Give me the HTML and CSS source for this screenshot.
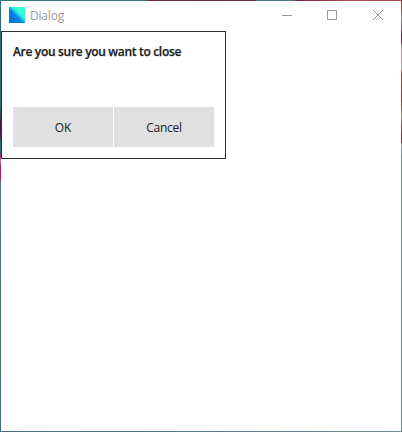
FILE: index.html
```html
<!DOCTYPE html>
<html lang="en">
<head>
<meta charset="utf-8">
<title>Dialog</title>
<link rel="stylesheet" href="styles.css">
</head>
<body>
<div class="desktop">
  <div class="edge edge-top"></div>
  <div class="edge edge-left"></div>
  <main class="window">
    <header class="titlebar">
      <span class="app-icon"></span>
      <span class="title">Dialog</span>
      <svg class="control" width="45" height="29" viewBox="0 0 45 29"><path d="M17 14.500h10"/></svg>
      <svg class="control" width="45" height="29" viewBox="0 0 45 29"><path d="M17.500 9.500h9v9h-9z"/></svg>
      <svg class="control" width="45" height="29" viewBox="0 0 45 29"><path d="M18 9l10 10M28 9l-10 10"/></svg>
    </header>
    <section class="dialog">
      <h1 class="message">Are you sure you want to close</h1>
      <div class="actions">
        <button class="btn">OK</button>
        <button class="btn btn-cancel">Cancel</button>
      </div>
    </section>
  </main>
  <div class="edge edge-right"></div>
  <div class="edge edge-bottom"></div>
</div>
</body>
</html>
```
FILE: styles.css
```css
* { box-sizing: border-box; }
body {
  margin: 0;
  overflow: hidden;
  font-family: "Open Sans", "Noto Sans", sans-serif;
}
.desktop {
  display: grid;
  width: 402px;
  height: 432px;
  grid-template: 1px 430px 1px / 1px 400px 1px;
}
.edge-top {
  grid-column: 1 / 4;
  background: linear-gradient(90deg, #397680 0 146px, #702c45 147px, #782d35 215px, #702643 255px, #4c7b85 256px 292px, #7b2448 297px, #b44950 350px, #a84548);
}
.edge-left { background: linear-gradient(#2c6977 0 105px, #32485b 113px, #481334 125px, #50234d 133px, #2c6977 141px 150px, #b02a68 156px, #c48aa6 160px, #b01c62 165px 177px, #4a7d86 183px, #417079); }
.edge-right { background: linear-gradient(#a74146 0 8px, #a17b98 14px, #915c82 28px, #97144b 34px 41px, #a99e9b 45px 68px, #a34c50 72px, #94422c 100px, #a88b7c 115px, #a22440 134px 141px, #a29d99 143px, #738d96 154px, #6d8b90); }
.edge-bottom { grid-column: 1 / 4; background: linear-gradient(90deg, #456f78, #6b8b90); }
.window { background: #fff; }
.titlebar {
  display: flex;
  height: 30px;
  padding: 0 1px 0 8px;
}
.app-icon {
  width: 16px;
  height: 16px;
  margin-top: 6px;
  background: linear-gradient(45deg, #0078d7 0 30%, #008cec 46%, #20dfdf 56%, #36ffd5 68%);
}
.title {
  flex: 1;
  margin-left: 5px;
  color: #999;
  font-size: 12px;
  letter-spacing: -0.2px;
  line-height: 30px;
}
.control { fill: none; stroke: #999; stroke-width: 1; }
.dialog {
  width: 225px;
  height: 128px;
  padding: 11px;
  border: 1px solid #2d2d30;
  background: #fff;
}
.message {
  height: 64px;
  margin: 0;
  color: #222;
  font-size: 12px;
  font-weight: 600;
  -webkit-text-stroke: 0.25px #222;
  letter-spacing: -0.32px;
  line-height: 18px;
  white-space: nowrap;
}
.actions { display: flex; gap: 1px; }
.btn {
  width: 100px;
  height: 40px;
  padding: 2px 0 0;
  border: 0;
  background: #e0e0e0;
  color: #222;
  font: 12px/38px "Open Sans", "Noto Sans", sans-serif;
}
.btn-cancel { letter-spacing: -0.3px; }
```
